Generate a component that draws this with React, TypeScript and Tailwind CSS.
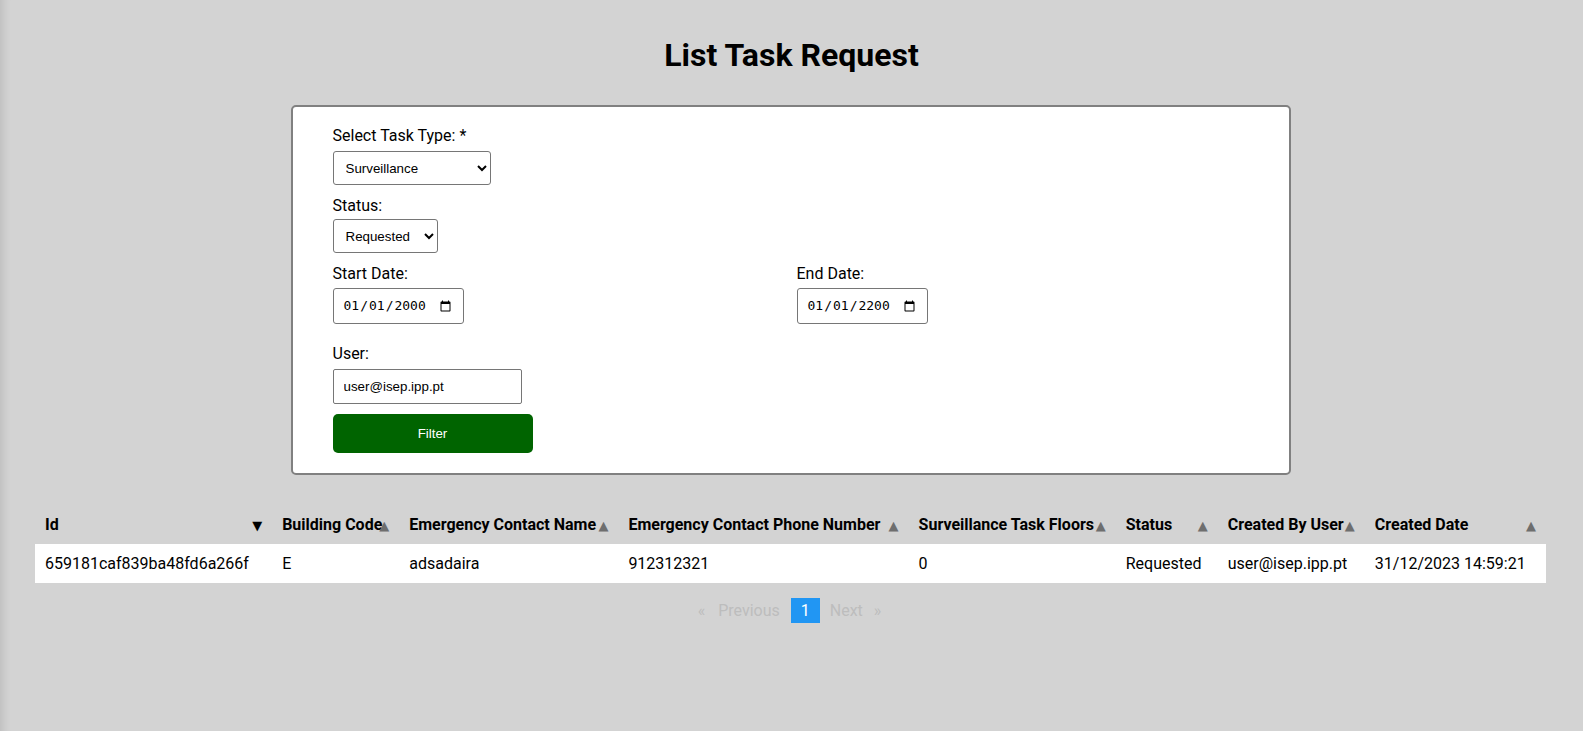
import React from 'react';

type Col = { key: string; label: string; width: string; sort?: 'asc' | 'desc' };

const columns: Col[] = [
  { key: 'id', label: 'Id', width: 'w-[237px]', sort: 'desc' },
  { key: 'building', label: 'Building Code', width: 'w-[127px]' },
  { key: 'contactName', label: 'Emergency Contact Name', width: 'w-[219px]' },
  { key: 'contactPhone', label: 'Emergency Contact Phone Number', width: 'w-[290px]' },
  { key: 'floors', label: 'Surveillance Task Floors', width: 'w-[207px]' },
  { key: 'status', label: 'Status', width: 'w-[102px]' },
  { key: 'createdBy', label: 'Created By User', width: 'w-[147px]' },
  { key: 'createdAt', label: 'Created Date', width: 'w-[181px]' },
];

const rows: Record<string, string>[] = [
  {
    id: '659181caf839ba48fd6a266f',
    building: 'E',
    contactName: 'adsadaira',
    contactPhone: '912312321',
    floors: '0',
    status: 'Requested',
    createdBy: 'user@isep.ipp.pt',
    createdAt: '31/12/2023 14:59:21',
  },
];

const fieldFont = "font-['Liberation_Sans',Arial,sans-serif] text-[13.33px] text-black";

function Label({ children, className = '' }: { children: React.ReactNode; className?: string }) {
  return <label className={`block text-[16px] leading-[19px] text-black ${className}`}>{children}</label>;
}

export default function App() {
  return (
    <div className="min-h-screen bg-[#d3d3d3] font-['Roboto',sans-serif] pb-10 pt-[36px] shadow-[inset_12px_0_10px_-10px_rgba(0,0,0,0.12)]">
      <h1 className="text-center text-[32px] font-bold leading-[38px] text-black">List Task Request</h1>

      <form
        className="mx-auto mt-[31px] w-[1000px] -translate-x-[1px] rounded-[5px] border-2 border-[#808080] bg-white px-[40px] pb-[20px] pt-[19px]"
        onSubmit={(e) => e.preventDefault()}
      >
        <Label className="mb-[6px]">Select Task Type: *</Label>
        <select
          defaultValue="surveillance"
          className={`mb-[11px] block h-[34px] w-[158px] rounded-[3px] border border-[#767676] bg-white px-[8px] ${fieldFont}`}
        >
          <option value="surveillance">Surveillance</option>
          <option value="pickup">Pickup &amp; Delivery</option>
        </select>

        <Label className="mb-[4px]">Status:</Label>
        <select
          defaultValue="requested"
          className={`mb-[11px] block h-[34px] w-[105px] rounded-[3px] border border-[#767676] bg-white px-[8px] ${fieldFont}`}
        >
          <option value="requested">Requested</option>
          <option value="approved">Approved</option>
          <option value="rejected">Rejected</option>
        </select>

        <div className="mb-[20px] flex">
          <div className="w-[464px]">
            <Label className="mb-[5px]">Start Date:</Label>
            <input
              type="date"
              defaultValue="2000-01-01"
              className="block h-[36px] w-[131px] rounded-[3px] border border-[#767676] bg-white px-[9px] font-['DejaVu_Sans_Mono',monospace] text-[13px] text-black"
            />
          </div>
          <div>
            <Label className="mb-[5px]">End Date:</Label>
            <input
              type="date"
              defaultValue="2200-01-01"
              className="block h-[36px] w-[131px] rounded-[3px] border border-[#767676] bg-white px-[9px] font-['DejaVu_Sans_Mono',monospace] text-[13px] text-black"
            />
          </div>
        </div>

        <Label className="mb-[6px]">User:</Label>
        <input
          type="text"
          defaultValue="user@isep.ipp.pt"
          className={`mb-[10px] block h-[35px] w-[189px] rounded-[2px] border border-[#767676] bg-white px-[10px] ${fieldFont}`}
        />

        <button
          type="submit"
          className="block h-[39px] w-[200px] rounded-[5px] bg-[#006400] font-['Liberation_Sans',Arial,sans-serif] text-[13.33px] text-white"
        >
          Filter
        </button>
      </form>

      <table className="mx-auto mt-[30px] w-[1511px] -translate-x-[1px] table-fixed border-collapse text-[16px] leading-[19px] text-black">
        <thead>
          <tr>
            {columns.map((c) => (
              <th key={c.key} className={`relative ${c.width} px-[10px] py-[10px] text-left font-bold`}>
                <span className="block whitespace-nowrap">{c.label}</span>
                <span
                  className={`absolute right-[10px] top-1/2 -translate-y-1/2 font-['DejaVu_Sans',sans-serif] text-[13px] leading-none ${
                    c.sort === 'desc' ? 'text-black' : 'text-[#6e6e6e]'
                  }`}
                >
                  {c.sort === 'desc' ? '▼' : '▲'}
                </span>
              </th>
            ))}
          </tr>
        </thead>
        <tbody>
          {rows.map((r) => (
            <tr key={r.id} className="bg-white">
              {columns.map((c) => (
                <td key={c.key} className="whitespace-nowrap px-[10px] py-[10px]">
                  {r[c.key]}
                </td>
              ))}
            </tr>
          ))}
        </tbody>
      </table>

      <nav className="mt-[15px] flex -translate-x-[2px] items-center justify-center text-[16px] leading-[19px]">
        <span className="text-[#bdbdbd]">«</span>
        <span className="ml-[13px] text-[#bdbdbd]">Previous</span>
        <span className="ml-[11px] bg-[#2196f3] px-[10px] py-[3px] text-white">1</span>
        <span className="ml-[10px] text-[#bdbdbd]">Next</span>
        <span className="ml-[11px] text-[#bdbdbd]">»</span>
      </nav>
    </div>
  );
}
